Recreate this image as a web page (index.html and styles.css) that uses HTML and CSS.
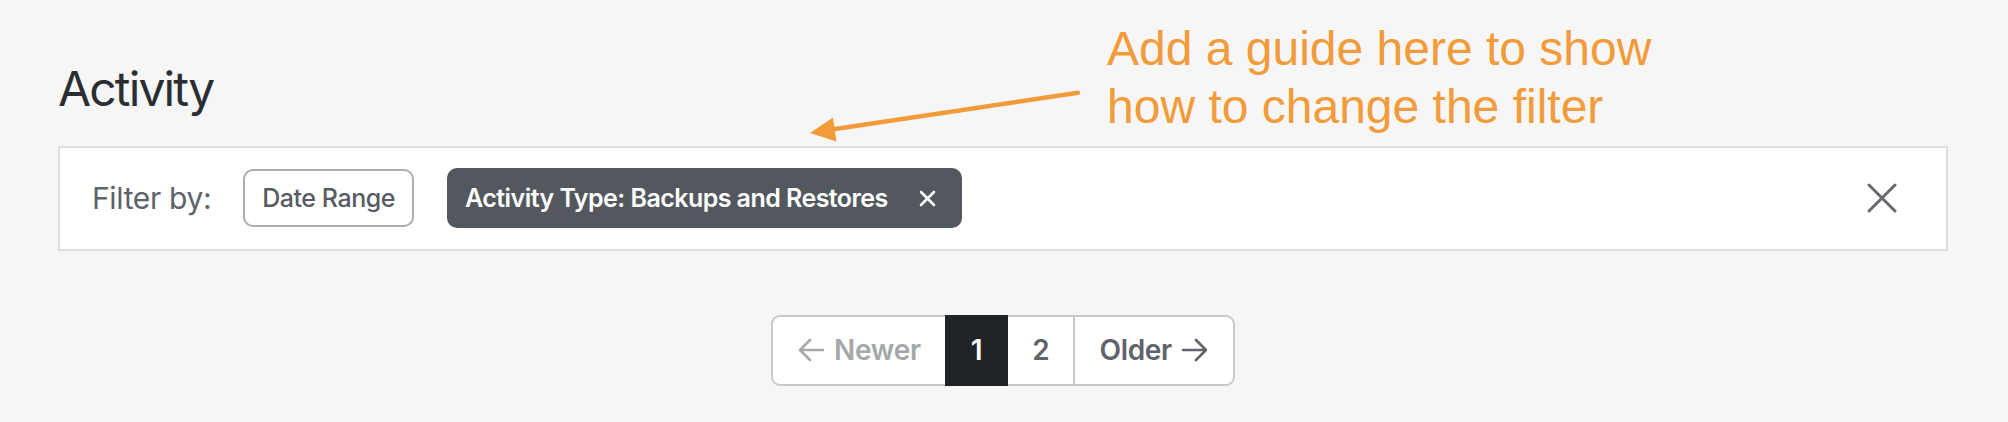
FILE: index.html
```html
<!DOCTYPE html>
<html lang="en">
<head>
<meta charset="utf-8">
<title>Activity</title>
<link rel="stylesheet" href="styles.css">
</head>
<body>
<main class="page">
  <h1 class="title">Activity</h1>

  <section class="filter-bar">
    <span class="filter-label">Filter by:</span>
    <button class="pill pill-outline">Date Range</button>
    <button class="pill pill-dark">Activity Type: Backups and Restores
      <svg class="pill-x" width="17" height="17" viewBox="0 0 17 17"><path d="M2 2 L15 15 M15 2 L2 15" stroke="#fff" stroke-width="2.6" stroke-linecap="round"/></svg>
    </button>
    <button class="clear-btn" aria-label="Clear filters">
      <svg width="30" height="30" viewBox="0 0 30 30"><path d="M2 2 L28 28 M28 2 L2 28" stroke="#676a70" stroke-width="3" stroke-linecap="round"/></svg>
    </button>
  </section>

  <nav class="pager">
    <span class="pg pg-first pg-disabled">
      <svg class="pg-arrow" width="32" height="28" viewBox="0 0 32 28"><path d="M28 14 H6 M15 4 L5 14 L15 24" fill="none" stroke="currentColor" stroke-width="2.6" stroke-linecap="round" stroke-linejoin="round"/></svg>
      Newer</span>
    <span class="pg pg-active">1</span>
    <span class="pg">2</span>
    <span class="pg pg-last">Older
      <svg class="pg-arrow pg-arrow-r" width="32" height="28" viewBox="0 0 32 28"><path d="M4 14 H26 M17 4 L27 14 L17 24" fill="none" stroke="currentColor" stroke-width="2.6" stroke-linecap="round" stroke-linejoin="round"/></svg>
    </span>
  </nav>

  <div class="note">
    <svg class="note-arrow" width="290" height="70" viewBox="0 0 290 70">
      <line x1="278" y1="12.7" x2="30" y2="49.7" stroke="#f29b3a" stroke-width="4.5" stroke-linecap="round"/>
      <polygon points="10,53 33,37.5 36.5,61.5" fill="#f29b3a"/>
    </svg>
    <p class="note-text">Add a guide here to show<br>how to change the filter</p>
  </div>
</main>
</body>
</html>
```

FILE: styles.css
```css
* { box-sizing: border-box; }

html, body {
  margin: 0;
  padding: 0;
  background: #f5f6f5;
}

body {
  font-family: Inter, "Noto Sans", sans-serif;
  color: #212529;
  height: 422px;
  overflow: hidden;
}

.page {
  position: relative;
  padding: 60px 60px 0 58px;
}

.title {
  margin: 0 0 28px 0;
  font-size: 48px;
  line-height: 57.6px;
  font-weight: 400;
  color: #2a2e33;
  letter-spacing: -1.85px;
}

.filter-bar {
  display: flex;
  align-items: center;
  background: #fff;
  border: 2px solid #dedede;
  padding: 20px 49px 20px 32px;
  height: 105px;
}

.filter-label {
  font-size: 30px;
  color: #5e6269;
  margin-right: 32px;
  letter-spacing: -0.35px;
}

.pill {
  font-family: Inter, "Noto Sans", sans-serif;
  display: inline-flex;
  align-items: center;
  border-radius: 10px;
  font-size: 25px;
  cursor: pointer;
}

.pill-outline {
  height: 58px;
  padding: 0 17px;
  background: #fff;
  border: 2px solid #adadad;
  color: #575b62;
  font-weight: 500;
  letter-spacing: -0.45px;
  margin-right: 33px;
}

.pill-dark {
  height: 60px;
  padding: 0 26px 0 18px;
  background: #53575e;
  border: none;
  color: #fff;
  font-weight: 600;
  letter-spacing: -0.55px;
}

.pill-x {
  margin-left: 31px;
}

.clear-btn {
  margin-left: auto;
  background: none;
  border: none;
  padding: 0;
  display: flex;
  cursor: pointer;
}

.pager {
  display: flex;
  justify-content: center;
  margin-top: 64px;
}

.pg {
  display: inline-flex;
  align-items: center;
  height: 71px;
  padding: 0 24px;
  border: 2px solid #c8c9cc;
  margin-left: -2px;
  background: #fff;
  font-size: 28px;
  font-weight: 600;
  color: #5f636a;
  letter-spacing: -0.3px;
}

.pg-first {
  margin-left: 0;
  border-radius: 9px 0 0 9px;
  padding-left: 22px;
}

.pg-last {
  border-radius: 0 9px 9px 0;
  padding-right: 22px;
}

.pg-disabled {
  color: #a5a7ab;
}

.pg-active {
  position: relative;
  z-index: 1;
  background: #1f2326;
  border-color: #1f2326;
  color: #fff;
}

.pg-arrow {
  margin-right: 7px;
}

.pg-arrow-r {
  margin-right: 0;
  margin-left: 7px;
}

.note {
  position: absolute;
  left: 0;
  top: 0;
}

.note-arrow {
  position: absolute;
  left: 800px;
  top: 80px;
}

.note-text {
  position: absolute;
  left: 1107px;
  top: 20px;
  margin: 0;
  width: 720px;
  font-family: "Liberation Sans", Arial, sans-serif;
  font-size: 48px;
  line-height: 58px;
  color: #f29b3a;
}
```
